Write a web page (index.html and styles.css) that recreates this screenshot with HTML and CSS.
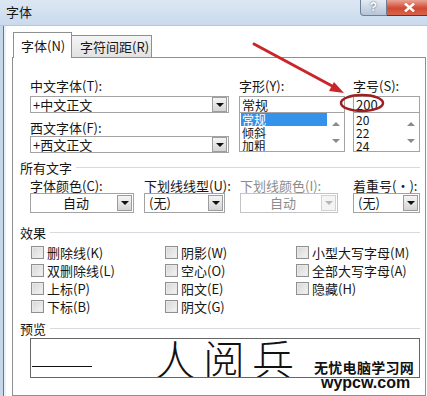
FILE: index.html
```html
<!DOCTYPE html>
<html lang="zh-CN">
  <head>
    <meta charset="UTF-8" />
    <title>字体</title>
    <link rel="stylesheet" href="styles.css">
  </head>
  <body>
    <div class="window">
      <div class="titlebar">
        <span class="title">字体</span>
        <div class="caption-btns">
          <span class="btn-help">?</span>
          <span class="btn-close">
            <svg width="11" height="9" viewBox="0 0 11 9"><path d="M1 0.5 L10 8.5 M10 0.5 L1 8.5" stroke="#fff" stroke-width="2.4" /></svg>
          </span>
        </div>
      </div>

      <div class="body">
        <div class="side"></div>
        <div class="client">
          <div class="tabs">
            <div class="tab active">字体(N)</div>
            <div class="tab">字符间距(R)</div>
          </div>

          <div class="panel">
            <div class="font-row">
              <div class="col-main">
                <div class="label">中文字体(T):</div>
                <div class="combo">
                  <span class="combo-text">+中文正文</span>
                  <span class="arrow-btn"><i class="tri"></i></span>
                </div>
                <div class="label second">西文字体(F):</div>
                <div class="combo">
                  <span class="combo-text">+西文正文</span>
                  <span class="arrow-btn"><i class="tri"></i></span>
                </div>
              </div>

              <div class="col-style">
                <div class="label">字形(Y):</div>
                <div class="edit">常规</div>
                <div class="listbox">
                  <div class="items">
                    <div class="item selected">常规</div>
                    <div class="item">倾斜</div>
                    <div class="item">加粗</div>
                  </div>
                  <div class="scroll"><i class="up"></i><i class="down"></i></div>
                </div>
              </div>

              <div class="col-size">
                <div class="label">字号(S):</div>
                <div class="edit">200</div>
                <div class="listbox">
                  <div class="items">
                    <div class="item">20</div>
                    <div class="item">22</div>
                    <div class="item">24</div>
                  </div>
                  <div class="scroll"><i class="up"></i><i class="down"></i></div>
                </div>
              </div>
            </div>

            <div class="group-title">所有文字</div>
            <div class="attr-row">
              <div class="field f-color">
                <div class="label">字体颜色(C):</div>
                <div class="combo tall">
                  <span class="combo-text center">自动</span>
                  <span class="arrow-btn"><i class="tri"></i></span>
                </div>
              </div>
              <div class="field f-uline">
                <div class="label">下划线线型(U):</div>
                <div class="combo tall">
                  <span class="combo-text">(无)</span>
                  <span class="arrow-btn"><i class="tri"></i></span>
                </div>
              </div>
              <div class="field f-ucolor disabled">
                <div class="label">下划线颜色(I):</div>
                <div class="combo tall">
                  <span class="combo-text center">自动</span>
                  <span class="arrow-btn"><i class="tri"></i></span>
                </div>
              </div>
              <div class="field f-emph">
                <div class="label">着重号(·):</div>
                <div class="combo tall">
                  <span class="combo-text">(无)</span>
                  <span class="arrow-btn"><i class="tri"></i></span>
                </div>
              </div>
            </div>

            <div class="group-title">效果</div>
            <div class="effects">
              <label class="check"><i class="box"></i>删除线(K)</label>
              <label class="check"><i class="box"></i>阴影(W)</label>
              <label class="check"><i class="box"></i>小型大写字母(M)</label>
              <label class="check"><i class="box"></i>双删除线(L)</label>
              <label class="check"><i class="box"></i>空心(O)</label>
              <label class="check"><i class="box"></i>全部大写字母(A)</label>
              <label class="check"><i class="box"></i>上标(P)</label>
              <label class="check"><i class="box"></i>阳文(E)</label>
              <label class="check"><i class="box"></i>隐藏(H)</label>
              <label class="check"><i class="box"></i>下标(B)</label>
              <label class="check"><i class="box"></i>阴文(G)</label>
            </div>

            <div class="group-title">预览</div>
            <div class="preview">
              <span class="preview-line"></span>
              <span class="preview-text">人阅兵</span>
            </div>
          </div>
        </div>
      </div>

      <!-- annotation drawn over the dialog -->
      <svg class="annot" width="427" height="396" viewBox="0 0 427 396">
        <line x1="254" y1="44" x2="334" y2="87" stroke="#c8262b" stroke-width="3" stroke-linecap="round" />
        <polygon points="344,93 329,91 334,82" fill="#c8262b" />
        <ellipse cx="362" cy="103" rx="21" ry="8" fill="none" stroke="#9e1f22" stroke-width="2.5" />
      </svg>

      <div class="watermark">
        <div class="wm-cn">无忧电脑学习网</div>
        <div class="wm-en">wypcw.com</div>
      </div>
    </div>
  </body>
</html>
```

FILE: styles.css
```css
* {
  box-sizing: border-box;
}

body {
  margin: 0;
  background-color: #fff;
  font-family: "Noto Sans CJK SC", "Liberation Sans", sans-serif;
  font-size: 13px;
  color: #161616;
}

.window {
  position: relative;
  width: 427px;
  height: 396px;
  overflow: hidden;
  background-color: #fff;
}

/* title bar */
.titlebar {
  height: 26px;
  display: flex;
  justify-content: space-between;
  align-items: flex-start;
  background: linear-gradient(#dce7f3, #c9daed);
  border-bottom: 1px solid #b4c6da;
}

.title {
  padding: 4px 0 0 6px;
  line-height: 15px;
}

.caption-btns {
  display: flex;
}

.btn-help {
  width: 27px;
  height: 16px;
  border: 1px solid #6f8096;
  border-top: none;
  border-radius: 0 0 0 4px;
  background: linear-gradient(#e4ebf3, #b5c4d6);
  color: #fff;
  font-family: "Liberation Sans", sans-serif;
  font-weight: bold;
  font-size: 12px;
  line-height: 14px;
  text-align: center;
  text-shadow: 0 0 2px #3b4a5c;
}

.btn-close {
  width: 40px;
  height: 16px;
  display: flex;
  align-items: center;
  padding-left: 17px;
  border-bottom: 1px solid #7a2a1e;
  background: linear-gradient(#eaa395, #cf4a33 55%, #d9644b);
}

/* frame + client */
.body {
  display: flex;
  height: 370px;
}

.side {
  width: 6px;
  background: linear-gradient(to right, #c6d7ea 0 3px, #62758b 3px 4px, #eaf0f7 4px);
}

.client {
  flex: 1;
  display: flex;
  flex-direction: column;
  padding: 6px 1px 0 6px;
}

.tabs {
  display: flex;
  align-items: flex-end;
  height: 25px;
  margin-left: 1px;
}

.tab {
  height: 22px;
  padding: 3px 0 0 8px;
  width: 80px;
  line-height: 15px;
  border: 1px solid #8e8f8f;
  border-left: none;
  border-bottom: none;
  background: linear-gradient(#f4f4f4, #e2e2e2);
}

.tab.active {
  position: relative;
  z-index: 1;
  width: 59px;
  height: 26px;
  margin-bottom: -1px;
  padding: 5px 0 0 7px;
  border-left: 1px solid #8e8f8f;
  background: #fff;
}

.panel {
  flex: 1;
  border: 1px solid #8e8f8f;
  padding: 20px 5px 0 7px;
  background-color: #fff;
}

.label {
  line-height: 15px;
  margin-bottom: 3px;
  white-space: nowrap;
}

.label.second {
  margin-top: 7px;
  margin-bottom: 1px;
}

/* font row */
.font-row {
  display: flex;
  margin-left: 10px;
}

.col-main {
  width: 199px;
}

.col-style {
  width: 106px;
  margin-left: 10px;
}

.col-size {
  width: 67px;
  margin-left: 8px;
}

.combo {
  height: 17px;
  display: flex;
  border: 1px solid #a3a3a3;
  background: #fff;
}

.combo.tall {
  height: 20px;
}

.combo-text {
  flex: 1;
  padding-left: 2px;
  line-height: 15px;
  white-space: nowrap;
}

.combo.tall .combo-text {
  line-height: 18px;
  padding-left: 4px;
}

.combo-text.center {
  text-align: center;
  padding-left: 0;
}

.arrow-btn {
  width: 15px;
  margin: 0 1px 0 0;
  display: flex;
  align-items: center;
  justify-content: center;
  border: 1px solid #9c9c9c;
  background: linear-gradient(#f5f5f5, #d4d4d4);
}

.combo.tall .arrow-btn {
  margin: 1px 1px 1px 0;
}

.tri {
  width: 0;
  height: 0;
  border-left: 4px solid transparent;
  border-right: 4px solid transparent;
  border-top: 4px solid #111;
}

.edit {
  height: 17px;
  border: 1px solid #a3a3a3;
  padding-left: 2px;
  line-height: 15px;
}

.listbox {
  height: 39px;
  display: flex;
  border: 1px solid #a3a3a3;
  border-top: none;
  overflow: hidden;
}

.items {
  flex: 1;
  padding-left: 1px;
}

.item {
  font-size: 12px;
  line-height: 13px;
  padding-left: 1px;
}

.item.selected {
  background-color: #3592ea;
  color: #fff;
}

.scroll {
  width: 17px;
  display: flex;
  flex-direction: column;
  align-items: center;
  padding-top: 9px;
  gap: 13px;
}

.scroll .up {
  border-left: 4px solid transparent;
  border-right: 4px solid transparent;
  border-bottom: 4px solid #8a8a8a;
}

.scroll .down {
  border-left: 4px solid transparent;
  border-right: 4px solid transparent;
  border-top: 4px solid #8a8a8a;
}

/* group headers */
.group-title {
  display: flex;
  align-items: center;
  line-height: 15px;
  margin-top: 7px;
}

.group-title::after {
  content: "";
  flex: 1;
  height: 1px;
  margin-left: 4px;
  background-color: #d6dadf;
}

.attr-row {
  display: flex;
  margin: 3px 0 0 10px;
}

.f-color {
  width: 104px;
}

.f-uline {
  width: 81px;
  margin-left: 10px;
}

.f-ucolor {
  width: 98px;
  margin-left: 15px;
}

.f-emph {
  width: 67px;
  margin-left: 15px;
}

.field .label {
  margin-bottom: 0;
}

.disabled .label,
.disabled .combo-text {
  color: #8c8c8c;
}

.disabled .combo {
  border-color: #c4c4c4;
}

.disabled .arrow-btn {
  border-color: #d2d2d2;
  background: #f4f4f4;
}

.disabled .tri {
  border-top-color: #b5b5b5;
}

.attr-row + .group-title {
  margin-top: 12px;
}

/* effects */
.effects {
  display: grid;
  grid-template-columns: 134px 131px 1fr;
  grid-auto-rows: 18px;
  margin: 3px 0 0 11px;
}

.check {
  display: flex;
  align-items: center;
  gap: 3px;
  white-space: nowrap;
}

.box {
  width: 13px;
  height: 13px;
  border: 1px solid #909090;
  background: linear-gradient(135deg, #d6d6d6, #f4f4f4);
  box-shadow: inset 0 0 0 1px #e8e8e8;
}

.effects + .group-title {
  margin-top: 6px;
}

/* preview */
.preview {
  display: flex;
  align-items: flex-start;
  height: 40px;
  margin: 2px 0 0 10px;
  border: 1px solid #666;
  overflow: hidden;
}

.preview-line {
  width: 60px;
  height: 1px;
  margin: 27px 0 0 1px;
  background-color: #111;
}

.preview-text {
  margin-left: 62px;
  margin-top: -3px;
  font-size: 42px;
  font-weight: 300;
  line-height: 44px;
  letter-spacing: 7px;
  color: #111;
}

/* overlays */
.annot {
  position: absolute;
  left: 0;
  top: 0;
  pointer-events: none;
}

.watermark {
  position: absolute;
  left: 314px;
  top: 360px;
  color: #111;
  text-shadow: 0 0 2px #fff;
}

.wm-cn {
  font-size: 14px;
  font-weight: bold;
  line-height: 15px;
  letter-spacing: 0.3px;
}

.wm-en {
  margin-left: 7px;
  font-family: "Liberation Sans", sans-serif;
  font-size: 16px;
  font-weight: bold;
  line-height: 15px;
}
```
